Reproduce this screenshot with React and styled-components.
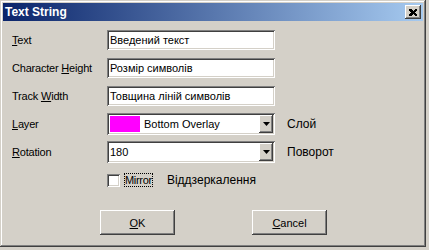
import styled, { createGlobalStyle } from 'styled-components';

const GlobalStyle = createGlobalStyle`
  html, body {
    margin: 0;
    padding: 0;
    background: #d4d0c8;
  }
  body {
    font-family: "Liberation Sans", Arial, sans-serif;
    color: #000;
  }
`;

const raised = `
  box-shadow: inset -1px -1px #404040, inset 1px 1px #ffffff,
    inset -2px -2px #808080, inset 2px 2px #d4d0c8;
`;

const sunken = `
  box-shadow: inset 1px 1px #808080, inset -1px -1px #ffffff,
    inset 2px 2px #404040, inset -2px -2px #d4d0c8;
`;

const Window = styled.div`
  width: 426px;
  height: 247px;
  box-sizing: border-box;
  padding: 3px;
  background: #d4d0c8;
  display: flex;
  flex-direction: column;
  box-shadow: inset -1px -1px #404040, inset 1px 1px #d4d0c8,
    inset -2px -2px #808080, inset 2px 2px #ffffff;
`;

const TitleBar = styled.div`
  height: 18px;
  display: flex;
  align-items: center;
  justify-content: space-between;
  padding: 0 2px;
  background: linear-gradient(to right, #0a246a, #a6caf0);
  color: #fff;
  font-weight: bold;
  font-size: 12px;
`;

const CloseButton = styled.div`
  width: 16px;
  height: 14px;
  background: #d4d0c8;
  display: flex;
  align-items: center;
  justify-content: center;
  ${raised}
`;

const Body = styled.div`
  display: flex;
  flex-direction: column;
  padding: 5px 0 0 9px;
`;

const Row = styled.div`
  display: flex;
  align-items: center;
  height: 28px;
`;

const Label = styled.div`
  width: 95px;
  font-size: 11px;
  letter-spacing: -0.2px;
`;

const U = styled.span`
  text-decoration: underline;
`;

const TextBox = styled.div`
  width: 168px;
  height: 20px;
  box-sizing: border-box;
  padding: 0 3px;
  background: #fff;
  display: flex;
  align-items: center;
  font-size: 11px;
  white-space: nowrap;
  ${sunken}
`;

const Combo = styled.div`
  width: 168px;
  height: 22px;
  box-sizing: border-box;
  padding: 2px;
  background: #fff;
  display: flex;
  align-items: stretch;
  font-size: 11px;
  ${sunken}
`;

const ComboValue = styled.div`
  flex: 1;
  display: flex;
  align-items: center;
  gap: 4px;
  padding-left: 1px;
`;

const Swatch = styled.div`
  width: 30px;
  height: 16px;
  background: ${p => p.color};
`;

const DropButton = styled.div`
  width: 14px;
  background: #d4d0c8;
  display: flex;
  align-items: center;
  justify-content: center;
  ${raised}
`;

const Note = styled.div`
  margin-left: 12px;
  font-size: 12px;
`;

const CheckBox = styled.div`
  width: 13px;
  height: 13px;
  box-sizing: border-box;
  background: #fff;
  ${sunken}
`;

const FocusLabel = styled.div`
  margin-left: 4px;
  padding: 1px 1px;
  font-size: 11px;
  outline: 1px dotted #000;
  outline-offset: -1px;
  letter-spacing: -0.3px;
`;

const MirrorNote = styled.div`
  margin-left: 14px;
  font-size: 12px;
`;

const ButtonRow = styled.div`
  display: flex;
  gap: 77px;
  margin-top: 16px;
  padding-left: 88px;
`;

const Button = styled.div`
  width: 75px;
  height: 25px;
  box-sizing: border-box;
  background: #d4d0c8;
  display: flex;
  align-items: center;
  justify-content: center;
  font-size: 11px;
  ${raised}
`;

const Arrow = () => (
  <svg width="7" height="4" viewBox="0 0 7 4">
    <path d="M0 0h7L3.5 4z" fill="#000" />
  </svg>
);

const CloseGlyph = () => (
  <svg width="8" height="7" viewBox="0 0 8 7" shapeRendering="crispEdges">
    <path d="M0 0h2l2 2 2-2h2v1l-2 2.5 2 2.5v1h-2l-2-2-2 2h-2v-1l2-2.5-2-2.5z" fill="#000" />
  </svg>
);

const fields = [
  { label: <><U>T</U>ext</>, value: 'Введений текст' },
  { label: <>Character <U>H</U>eight</>, value: 'Розмір символів' },
  { label: <>Track <U>W</U>idth</>, value: 'Товщина ліній символів' },
];

const App = () => {
  return (
    <>
      <GlobalStyle />
      <Window>
        <TitleBar>
          <span>Text String</span>
          <CloseButton><CloseGlyph /></CloseButton>
        </TitleBar>
        <Body>
          {fields.map((f, i) => (
            <Row key={i}>
              <Label>{f.label}</Label>
              <TextBox>{f.value}</TextBox>
            </Row>
          ))}
          <Row>
            <Label><U>L</U>ayer</Label>
            <Combo>
              <ComboValue>
                <Swatch color="#ff00ff" />
                <span>Bottom Overlay</span>
              </ComboValue>
              <DropButton><Arrow /></DropButton>
            </Combo>
            <Note>Слой</Note>
          </Row>
          <Row>
            <Label><U>R</U>otation</Label>
            <Combo>
              <ComboValue>180</ComboValue>
              <DropButton><Arrow /></DropButton>
            </Combo>
            <Note>Поворот</Note>
          </Row>
          <Row>
            <Label />
            <CheckBox />
            <FocusLabel>Mirror</FocusLabel>
            <MirrorNote>Віддзеркалення</MirrorNote>
          </Row>
          <ButtonRow>
            <Button><U>O</U>K</Button>
            <Button><U>C</U>ancel</Button>
          </ButtonRow>
        </Body>
      </Window>
    </>
  );
};

export default App;
